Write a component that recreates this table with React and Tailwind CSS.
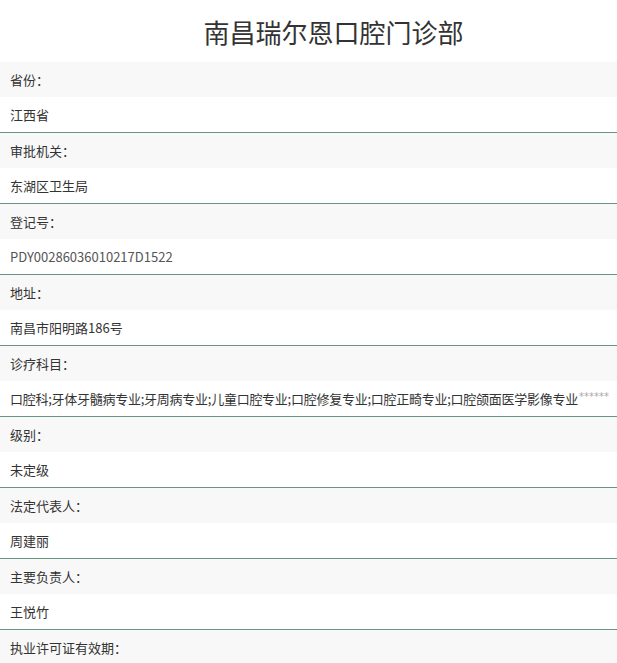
import React from "react";

const items = [
  { label: "省份：", value: "江西省" },
  { label: "审批机关：", value: "东湖区卫生局" },
  { label: "登记号：", value: "PDY00286036010217D1522", light: true },
  { label: "地址：", value: "南昌市阳明路186号" },
  {
    label: "诊疗科目：",
    value:
      "口腔科;牙体牙髓病专业;牙周病专业;儿童口腔专业;口腔修复专业;口腔正畸专业;口腔颌面医学影像专业",
    stars: true,
  },
  { label: "级别：", value: "未定级" },
  { label: "法定代表人：", value: "周建丽" },
  { label: "主要负责人：", value: "王悦竹" },
  { label: "执业许可证有效期：", value: "" },
];

const App = () => {
  return (
    <div
      className="w-[617px] bg-white text-[#333]"
      style={{ fontFamily: '"Noto Sans CJK SC", "Noto Sans", sans-serif' }}
    >
      <h1 className="h-[62px] flex items-center justify-center pl-[50px] text-[26px] font-normal text-[#333]">
        南昌瑞尔恩口腔门诊部
      </h1>
      {items.map((item, index) => (
        <div key={index} className="border-b border-[#6a9484]">
          <div className="h-[35px] flex items-center px-[10px] bg-[#f8f8f8] text-[13px]">
            {item.label}
          </div>
          <div
            className={
              "h-[35px] flex items-center px-[10px] bg-white whitespace-nowrap text-[13px] " +
              (item.light ? "text-[#555] " : "text-[#333] ") +
              (item.stars ? "tracking-[-0.26px]" : "")
            }
          >
            {item.value}
            {item.stars && (
              <span
                className="text-[10px] tracking-normal text-[#aaa] ml-[1px] -mt-[4px]"
                style={{ fontFamily: '"DejaVu Sans", sans-serif' }}
              >
                ******
              </span>
            )}
          </div>
        </div>
      ))}
    </div>
  );
};

export default App;
